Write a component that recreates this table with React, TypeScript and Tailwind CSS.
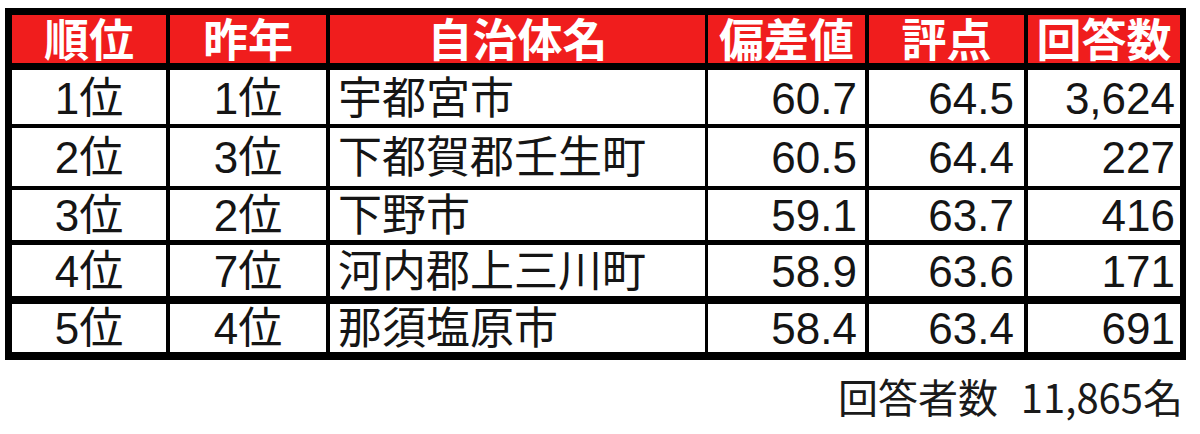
import React from 'react';

type Row = {
  rank: string;
  prev: string;
  name: string;
  dev: string;
  score: string;
  count: string;
};

const rows: Row[] = [
  { rank: '1位', prev: '1位', name: '宇都宮市', dev: '60.7', score: '64.5', count: '3,624' },
  { rank: '2位', prev: '3位', name: '下都賀郡壬生町', dev: '60.5', score: '64.4', count: '227' },
  { rank: '3位', prev: '2位', name: '下野市', dev: '59.1', score: '63.7', count: '416' },
  { rank: '4位', prev: '7位', name: '河内郡上三川町', dev: '58.9', score: '63.6', count: '171' },
  { rank: '5位', prev: '4位', name: '那須塩原市', dev: '58.4', score: '63.4', count: '691' },
];

// row boxes: separator above + height, to match the uneven excel grid lines
const rowBoxes = [
  'mt-[7px] h-[54px]',
  'mt-[4px] h-[58px]',
  'mt-[4px] h-[50px]',
  'mt-[5px] h-[51px]',
  'mt-[8px] h-[48px]',
];

const textOffset = ['pt-[4px]', 'pt-[2px]', 'pt-[2px]', 'pt-[2px]', 'pt-[2px]'];

const cell = 'flex items-center bg-white text-[44px] leading-none text-[#151515]';

export default function App() {
  return (
    <div
      className="h-[434px] w-[1200px] bg-white pl-[5px] pt-[8px]"
      style={{ fontFamily: '"Liberation Sans", "Noto Sans CJK JP", sans-serif' }}
    >
      <div className="w-[1181px] bg-black pb-[8px] pl-[7px] pr-[6px] pt-[7px]">
        {/* header */}
        <div className="flex h-[48px] gap-[4px] text-[45px] font-bold leading-none text-white">
          <div className="flex w-[154px] items-center justify-center bg-[#f01d1d] pt-[4px]">順位</div>
          <div className="flex w-[156px] items-center justify-center bg-[#f01d1d] pt-[4px]">昨年</div>
          <div className="mr-[-1px] flex w-[375px] items-center justify-center bg-[#f01d1d] pt-[4px]">自治体名</div>
          <div className="flex w-[157px] items-center justify-center bg-[#f01d1d] pt-[4px]">偏差値</div>
          <div className="flex w-[155px] items-center justify-center bg-[#f01d1d] pt-[4px]">評点</div>
          <div className="flex w-[152px] items-center justify-center bg-[#f01d1d] pt-[4px]">回答数</div>
        </div>

        {rows.map((r, i) => (
          <div key={r.rank} className={`flex gap-[4px] ${rowBoxes[i]}`}>
            <div className={`${cell} ${textOffset[i]} w-[154px] justify-center`}>{r.rank}</div>
            <div className={`${cell} ${textOffset[i]} w-[156px] justify-center`}>{r.prev}</div>
            <div className={`${cell} ${textOffset[i]} mr-[-1px] w-[375px] pl-[8px]`}>{r.name}</div>
            <div className={`${cell} ${textOffset[i]} w-[157px] justify-end pr-[8px]`}>{r.dev}</div>
            <div className={`${cell} ${textOffset[i]} w-[155px] justify-end pr-[10px]`}>{r.score}</div>
            <div className={`${cell} ${textOffset[i]} w-[152px] justify-end pr-[5px]`}>{r.count}</div>
          </div>
        ))}
      </div>

      <div className="mt-[16px] flex w-[1178px] justify-end">
        <p
          className="text-[40px] leading-none text-[#1a1a1a] [word-spacing:14px]"
          style={{ fontFamily: '"Noto Sans CJK JP", sans-serif' }}
        >
          回答者数 11,865名
        </p>
      </div>
    </div>
  );
}
